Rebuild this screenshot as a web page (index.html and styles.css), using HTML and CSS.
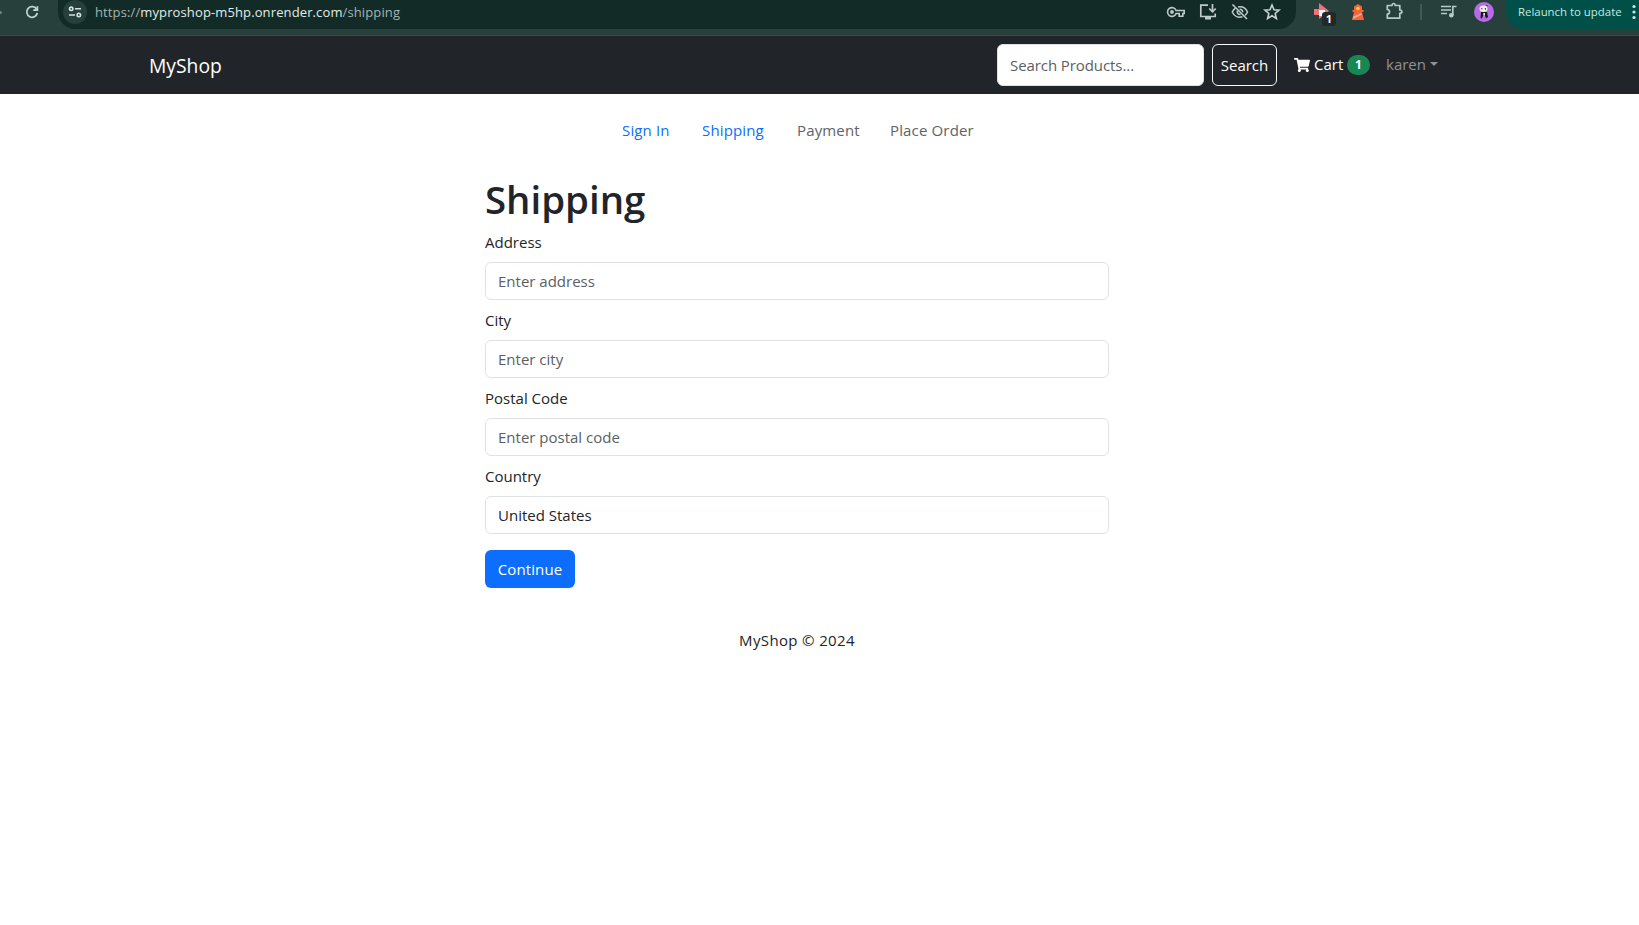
FILE: index.html
```html
<!DOCTYPE html>
<html lang="en">
<head>
<meta charset="utf-8">
<title>Shipping</title>
<link rel="stylesheet" href="styles.css">
</head>
<body>
<div class="browser">
  <span class="back-tip"></span>
  <svg class="reload" width="20" height="20" viewBox="0 0 20 20"><path d="M14.6 7.2A5.3 5.3 0 1 0 15.3 11M15.4 4.2V8.2H11.2" fill="none" stroke="#c0d6d0" stroke-width="1.7"/></svg>
  <div class="omnibox">
    <span class="site-info"><svg width="14" height="14" viewBox="0 0 14 14" fill="none" stroke="#d5e3df" stroke-width="1.6"><circle cx="3.2" cy="3.8" r="1.7"/><path d="M7 3.8h6M1 10h6"/><circle cx="10.8" cy="10" r="1.7"/></svg></span>
    <span class="url"><span class="dim">https://</span>myproshop-m5hp.onrender.com<span class="dim">/shipping</span></span>
    <div class="omni-icons">
      <svg width="20" height="20" viewBox="0 0 20 20" fill="none" stroke="#bccbc7" stroke-width="1.6"><path d="M10.1 10.5a4.4 4.4 0 1 1 0-3H18.2V10.5H16.8V13.2H13.2V10.5Z" transform="translate(0 1)"/><circle cx="6" cy="10" r="1.1" fill="#bccbc7"/></svg>
      <svg width="20" height="20" viewBox="0 0 20 20" fill="none" stroke="#bccbc7" stroke-width="1.7"><path d="M10 3.2H2.8V14.5H17.2V11.5M14.5 2v7M11.2 6.5l3.3 3.3 3.3-3.3"/><path d="M7 16h6" stroke-width="3"/></svg>
      <svg width="20" height="20" viewBox="0 0 20 20" fill="none" stroke="#bccbc7" stroke-width="1.6"><path d="M2.5 2.5l14.5 14.5M8 5c4-.8 7.800 1 9.500 5-.6 1.400-1.400 2.500-2.500 3.300M12.500 14.700C8 16 4 14 2.300 10c.6-1.500 1.600-2.800 2.900-3.700M9.600 7.200c1.800-.2 3.200 1.200 3.100 3M7.400 8.800c-.7 2.200.9 4 3.100 3.700"/></svg>
      <svg width="20" height="20" viewBox="0 0 20 20" fill="none" stroke="#c6d4d0" stroke-width="1.6"><path d="M10 3l2 4.700 5.100.4-3.900 3.400 1.200 5L10 13.800l-4.400 2.700 1.200-5L2.900 8.100 8 7.700z"/></svg>
    </div>
  </div>
  <div class="extensions">
    <svg class="ext-arrow" width="26" height="26" viewBox="0 0 26 26"><path d="M3 8h5V2l10 8-10 8v-4H3z" fill="#f4707b"/><path d="M8 9h6v6H8z" fill="#fff"/><rect x="11" y="11" width="14" height="14" rx="3" fill="#202a29"/><text x="18" y="22.300" class="ext-count">1</text></svg>
    <svg class="lighthouse" width="14" height="18" viewBox="0 0 14 18"><path d="M7 1l4 2.500v3.500h1.500v2H11L13 17H1L3 9H1.500V7H3V3.500z" fill="#f4633a"/><circle cx="7" cy="5.500" r="1.800" fill="#ffd33d"/><path d="M2.300 13.500l8-3.500.6 1.800L1.800 16z" fill="#ffa58c"/></svg>
    <svg class="puzzle" width="20" height="20" viewBox="0 0 20 20" fill="none" stroke="#b4ccc5" stroke-width="1.700"><path d="M3.300 4.500H8C8 1.800 11.200 1.800 11.200 4.500H15.800V9C18.600 9 18.600 12.300 15.800 12.300V17.200H3.300V13.200C6.200 13.200 6.200 8.500 3.300 8.500Z" stroke-linejoin="round"/></svg>
    <span class="divider"></span>
    <svg class="queue" width="18" height="16" viewBox="0 0 18 16"><path d="M1 2.500h10M1 6h10M1 9.500h6" stroke="#b4ccc5" stroke-width="1.700"/><path d="M12.800 11V2.500H16.500" fill="none" stroke="#b4ccc5" stroke-width="1.700"/><circle cx="11.300" cy="11.200" r="2.300" fill="#b4ccc5"/></svg>
    <svg class="avatar" width="20" height="20" viewBox="0 0 20 20"><circle cx="10" cy="10" r="10" fill="#b96ae6"/><path d="M7 10h6l1 5-2 1.500-1-3H9L8 16.500 6.500 16z" fill="#171717"/><ellipse cx="9.500" cy="6.800" rx="4" ry="3.300" fill="#eee"/><path d="M7 6l1.500.5-.5 1.500zM10.500 6.500l1.500-.5v2zM12 3h1.500v1.500" fill="#252525"/><path d="M9.300 11h1.700v2.500H9.300z" fill="#eee"/></svg>
  </div>
  <div class="relaunch"><span>Relaunch to update</span><svg width="4" height="16" viewBox="0 0 4 16" fill="#c5e9df"><circle cx="2" cy="2.500" r="1.600"/><circle cx="2" cy="8" r="1.600"/><circle cx="2" cy="13.500" r="1.600"/></svg></div>
</div>
<header class="navbar">
  <div class="container">
    <a class="brand">MyShop</a>
    <form class="search">
      <input class="control search-input" type="text" placeholder="Search Products...">
      <button class="search-button" type="button">Search</button>
    </form>
    <a class="cart"><svg width="16" height="16" viewBox="0 0 576 512" fill="#fff"><path d="M528.120 301.319l47.273-208C578.806 78.301 567.391 64 551.990 64H159.208l-9.166-44.810C147.758 8.021 137.930 0 126.529 0H24C10.745 0 0 10.745 0 24v16c0 13.255 10.745 24 24 24h69.883l70.248 343.435C147.325 417.100 136 435.222 136 456c0 30.928 25.072 56 56 56s56-25.072 56-56c0-15.674-6.447-29.835-16.824-40h209.647C430.447 426.165 424 440.326 424 456c0 30.928 25.072 56 56 56s56-25.072 56-56c0-22.172-12.888-41.332-31.579-50.405l5.517-24.276c3.413-15.018-8.002-29.319-23.403-29.319H218.117l-6.545-32h293.145c11.206 0 20.920-7.754 23.403-18.681z"/></svg><span>Cart</span></a>
    <span class="badge">1</span>
    <a class="user"><span>karen</span><i class="caret"></i></a>
  </div>
</header>
<main class="page">
  <nav class="steps"><a class="on">Sign In</a><a class="on">Shipping</a><a>Payment</a><a>Place Order</a></nav>
  <form class="shipping">
    <h1>Shipping</h1>
    <div class="field"><label>Address</label><input class="control" type="text" placeholder="Enter address"></div>
    <div class="field"><label>City</label><input class="control" type="text" placeholder="Enter city"></div>
    <div class="field"><label>Postal Code</label><input class="control" type="text" placeholder="Enter postal code"></div>
    <div class="field"><label>Country</label><input class="control" type="text" value="United States"></div>
    <button class="continue" type="button">Continue</button>
  </form>
  <footer>MyShop © 2024</footer>
</main>
</body>
</html>
```
FILE: styles.css
```css
* { box-sizing: border-box; }
body { margin: 0; background: #fff; color: #212529; font: 15px/24px "Open Sans", "Noto Sans", sans-serif; overflow: hidden; }
input, button { font: inherit; margin: 0; }
svg { display: block; flex: none; }

.browser { height: 36px; display: flex; align-items: flex-start; background: #28403c; border-bottom: 1px solid #414b49; overflow: hidden; }
.back-tip { width: 2px; height: 3px; margin-top: 11px; background: #71827e; border-radius: 0 2px 2px 0; }
.reload { margin: 2px 0 0 20px; }
.omnibox { width: 1238px; height: 29px; margin-left: 16px; padding: 0 14px 5px 5px; background: #122b27; border-radius: 0 0 17px 17px; display: flex; align-items: center; }
.site-info { width: 24px; height: 24px; border-radius: 50%; background: #28403c; display: grid; place-items: center; }
.url { margin-left: 8px; font-size: 13px; line-height: 20px; letter-spacing: 0.12px; color: #e2ebe8; white-space: nowrap; }
.dim { color: #a4b4b0; }
.omni-icons { margin-left: auto; display: flex; gap: 12px; }
.extensions { display: flex; height: 24px; align-items: center; }
.ext-arrow { margin: 3px 0 0 15px; }
.ext-count { font: 700 11px "Open Sans", sans-serif; fill: #fff; text-anchor: middle; }
.lighthouse { margin-left: 14px; }
.puzzle { margin: -2px 0 0 19px; }
.divider { width: 2px; height: 16px; margin-left: 16px; background: #405a55; }
.queue { margin-left: 18px; }
.avatar { margin-left: 16px; }
.relaunch { flex: 1; height: 29px; margin-left: 12px; padding: 0 3px 5px 12px; background: #00504a; border-radius: 0 0 0 17px; display: flex; align-items: center; justify-content: space-between; font-size: 11.4px; color: #c5e9df; white-space: nowrap; }

.navbar { height: 58px; background: #212529; }
.container { width: 1320px; height: 58px; margin-left: 137px; padding: 0 20px 0 12px; display: flex; align-items: center; }
.brand { padding-top: 1px; font-size: 19.3px; line-height: 30px; color: #fff; }
.control { display: block; width: 100%; height: 38px; padding: 6px 12px; border: 1px solid #dee2e6; border-radius: 6px; background: #fff; color: #212529; outline: 0; }
.control::placeholder { color: #595f64; opacity: 1; }
.search { margin-left: auto; display: flex; gap: 8px; }
.search-input { width: 207px; height: 42px; letter-spacing: -0.08px; }
.search-button { width: 65px; height: 42px; padding: 0; border: 1px solid #f8f9fa; border-radius: 6px; background: none; color: #fff; }
.cart { margin-left: 17px; width: 49px; display: flex; align-items: center; gap: 4px; color: #fff; }
.cart svg { margin-top: 2px; }
.badge { width: 23px; height: 20px; margin-left: 4px; border-radius: 10px; background: #198754; color: #fff; font-size: 12px; font-weight: 700; line-height: 20px; text-align: center; }
.user { margin-left: 16px; width: 51px; display: flex; align-items: center; gap: 4px; color: #909294; }
.caret { border: 4px solid transparent; border-top-color: #909294; border-bottom: 0; }
.cart, .user { position: relative; top: -1px; }

.page { width: 1594px; }
.steps { height: 72px; padding-top: 24px; margin-left: 622px; display: grid; grid-template-columns: 80px 95px 93px auto; letter-spacing: 0.15px; color: #5d6368; }
.on { color: #0d6efd; }
.shipping { width: 624px; margin: 9px 0 0 485px; }
h1 { margin: 0 0 7px; font-size: 38.4px; font-weight: 600; line-height: 48px; }
label { display: block; height: 24px; margin-bottom: 8px; }
.field { margin-bottom: 8px; }
.continue { display: block; width: 90px; height: 38px; margin-top: 16px; padding: 0; border: 0; border-radius: 6px; background: #0d6efd; color: #fff; letter-spacing: 0.1px; }
footer { padding-top: 40px; text-align: center; letter-spacing: 0.35px; }
```
